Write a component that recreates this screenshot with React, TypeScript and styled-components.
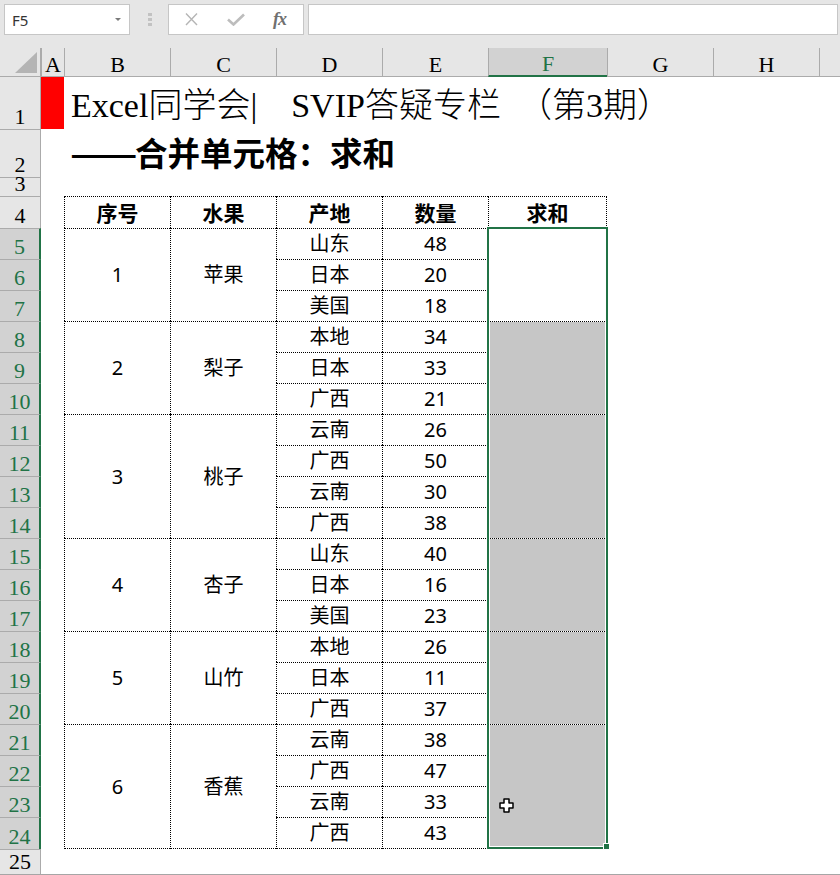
import styled, { createGlobalStyle } from "styled-components"

const GREEN = "#217346"
const HEAD_LINE = "#ababab"

const GlobalStyle = createGlobalStyle`
  html, body {
    margin: 0;
    padding: 0;
  }
  body {
    background: #ffffff;
    font-family: "Noto Sans", "Noto Sans CJK SC", sans-serif;
    overflow: hidden;
  }
`

const Window = styled.div`
  position: relative;
  width: 840px;
  height: 875px;
  display: flex;
  flex-direction: column;
  overflow: hidden;
  background: #ffffff;
`

/* ---------- formula bar ---------- */

const FormulaBar = styled.div`
  flex: none;
  height: 48px;
  box-sizing: border-box;
  display: flex;
  align-items: flex-start;
  padding: 4px 2px 0 4px;
  background: #e6e6e6;
`

const Field = styled.div`
  height: 31px;
  box-sizing: border-box;
  background: #ffffff;
  border: 1px solid #c6c6c6;
`

const NameBox = styled(Field)`
  width: 126px;
  display: flex;
  align-items: center;
  justify-content: space-between;
  padding: 0 8px 0 7px;
  font: 15px "Noto Sans", sans-serif;
  color: #333333;
`

const Caret = styled.span`
  width: 0;
  height: 0;
  border-left: 3px solid transparent;
  border-right: 3px solid transparent;
  border-top: 3px solid #7a7a7a;
`

const Grip = styled.div`
  display: flex;
  flex-direction: column;
  gap: 2px;
  margin: 9px 16px 0 18px;
`

const GripDot = styled.span`
  width: 4px;
  height: 3px;
  background: #c2c2c2;
`

const FxBox = styled(Field)`
  width: 136px;
  display: flex;
  align-items: center;
  gap: 28px;
  padding: 0 15px;
`

const FxLabel = styled.span`
  font: italic bold 18px "Liberation Serif", serif;
  color: #707070;
  letter-spacing: -1px;
`

const FormulaInput = styled(Field)`
  flex: 1;
  margin-left: 4px;
`

/* ---------- sheet ---------- */

const Sheet = styled.div`
  flex: none;
  display: grid;
  grid-template-columns: 41px 23px 106px 106px 106px 106px 119px 106px 106px 1fr;
  grid-template-rows: 29px 52px 48px 19px 32px repeat(19, 31px) 32px 25px;
  border-bottom: 1px solid #a6a6a6;
  background: #ffffff;
`

const Corner = styled.div`
  grid-row: 1;
  grid-column: 1;
  box-sizing: border-box;
  background: #e6e6e6;
  border-right: 1px solid ${HEAD_LINE};
  border-bottom: 1px solid ${HEAD_LINE};
  display: flex;
  align-items: flex-end;
  padding: 0 0 3px 15px;
`

const ColHead = styled.div<{ $col: number; $selected?: boolean }>`
  grid-row: 1;
  grid-column: ${(p) => p.$col + 1};
  box-sizing: border-box;
  display: flex;
  align-items: flex-end;
  justify-content: center;
  background: ${(p) => (p.$selected ? "#d2d2d2" : "#e6e6e6")};
  border-left: 1px solid ${HEAD_LINE};
  border-bottom: ${(p) => (p.$selected ? `2px solid ${GREEN}` : `1px solid ${HEAD_LINE}`)};
  font: 22px/22px "Liberation Serif", serif;
  color: ${(p) => (p.$selected ? GREEN : "#000000")};
`

const RowHead = styled.div<{ $row: number; $selected?: boolean }>`
  grid-row: ${(p) => p.$row + 1};
  grid-column: 1;
  box-sizing: border-box;
  display: flex;
  align-items: flex-end;
  justify-content: center;
  padding-bottom: 4px;
  background: ${(p) => (p.$selected ? "#d2d2d2" : "#e6e6e6")};
  border-top: ${(p) => (p.$row === 1 ? "none" : `1px solid ${HEAD_LINE}`)};
  border-right: ${(p) => (p.$selected ? `2px solid ${GREEN}` : `1px solid ${HEAD_LINE}`)};
  font: 22px/16px "Liberation Serif", serif;
  color: ${(p) => (p.$selected ? GREEN : "#000000")};
`

const RedMark = styled.div`
  grid-row: 2;
  grid-column: 2;
  background: #ff0000;
`

const Title = styled.div`
  grid-row: 2;
  grid-column: 3 / -1;
  display: flex;
  align-items: flex-end;
  padding: 0 0 6px 7px;
  white-space: pre;
  font: 300 34px/34px "Liberation Serif", "Noto Sans CJK SC", serif;
  color: #000000;
`

const Subtitle = styled.div`
  grid-row: 3;
  grid-column: 3 / -1;
  display: flex;
  align-items: flex-end;
  padding: 0 0 9px 6px;
  white-space: nowrap;
  font: bold 32.5px/32.5px "Noto Sans CJK SC", sans-serif;
  color: #000000;
`

const Dashes = styled.span`
  display: inline-block;
  width: 66px;
  transform-origin: left center;
  transform: scaleX(1.22);
  margin-right: -1px;
`

type CellProps = {
  $row: number
  $col: number
  $span?: number
  $head?: boolean
  $shade?: boolean
  $edgeRight?: boolean
  $edgeBottom?: boolean
}

const Cell = styled.div<CellProps>`
  grid-row: ${(p) => p.$row + 1} / span ${(p) => p.$span ?? 1};
  grid-column: ${(p) => p.$col + 1};
  box-sizing: border-box;
  display: flex;
  align-items: center;
  justify-content: center;
  border-left: 1px dotted #000000;
  border-top: 1px dotted #000000;
  border-right: ${(p) => (p.$edgeRight ? "1px dotted #000000" : "none")};
  border-bottom: ${(p) => (p.$edgeBottom ? "1px dotted #000000" : "none")};
  background: ${(p) => (p.$shade ? "#c6c6c6" : "#ffffff")};
  background-clip: padding-box;
  color: #000000;
  font: ${(p) =>
    p.$head
      ? `bold 21px/1 "Noto Sans CJK SC", sans-serif`
      : `20px/1 "Noto Sans", "Noto Sans CJK SC", sans-serif`};
`

const SelectionFrame = styled.div`
  grid-column: 7;
  grid-row: 6 / 26;
  margin: -1px -1px 0 -1px;
  position: relative;
  z-index: 2;
  border: 2px solid ${GREEN};
  box-shadow: inset 0 0 0 1px #ffffff;
  pointer-events: none;
`

const FillHandle = styled.span`
  position: absolute;
  right: -3px;
  bottom: -2px;
  width: 5px;
  height: 5px;
  background: ${GREEN};
  border-left: 1px solid #ffffff;
  border-top: 1px solid #ffffff;
`

const Pointer = styled.svg`
  position: absolute;
  left: 499px;
  top: 798px;
  z-index: 3;
`

const COLUMNS = ["A", "B", "C", "D", "E", "F", "G", "H", ""]
const HEADERS = ["序号", "水果", "产地", "数量", "求和"]

const GROUPS: { no: number; fruit: string; items: [string, number][] }[] = [
  { no: 1, fruit: "苹果", items: [["山东", 48], ["日本", 20], ["美国", 18]] },
  { no: 2, fruit: "梨子", items: [["本地", 34], ["日本", 33], ["广西", 21]] },
  { no: 3, fruit: "桃子", items: [["云南", 26], ["广西", 50], ["云南", 30], ["广西", 38]] },
  { no: 4, fruit: "杏子", items: [["山东", 40], ["日本", 16], ["美国", 23]] },
  { no: 5, fruit: "山竹", items: [["本地", 26], ["日本", 11], ["广西", 37]] },
  { no: 6, fruit: "香蕉", items: [["云南", 38], ["广西", 47], ["云南", 33], ["广西", 43]] },
]

const LAST_ROW = 24

function CloseIcon() {
  return (
    <svg width="15" height="13" viewBox="0 0 15 13">
      <path d="M2 0.5 L13 12 M13 0.5 L2 12" stroke="#b5b5b5" strokeWidth="1.4" fill="none" />
    </svg>
  )
}

function CheckIcon() {
  return (
    <svg width="18" height="13" viewBox="0 0 18 13">
      <path d="M1 6.5 L6.5 11.5 L17 1.5" stroke="#bdbdbd" strokeWidth="2.6" fill="none" />
    </svg>
  )
}

export default function App() {
  let start = 5
  const groups = GROUPS.map((g) => {
    const row = start
    start += g.items.length
    return { ...g, row }
  })

  return (
    <Window>
      <GlobalStyle />
      <FormulaBar>
        <NameBox>
          F5
          <Caret />
        </NameBox>
        <Grip>
          <GripDot />
          <GripDot />
          <GripDot />
        </Grip>
        <FxBox>
          <CloseIcon />
          <CheckIcon />
          <FxLabel>fx</FxLabel>
        </FxBox>
        <FormulaInput />
      </FormulaBar>

      <Sheet>
        <Corner>
          <svg width="22" height="21" viewBox="0 0 22 21">
            <path d="M22 0 L22 21 L0 21 Z" fill="#b4b4b4" />
          </svg>
        </Corner>
        {COLUMNS.map((c, i) => (
          <ColHead key={i} $col={i + 1} $selected={c === "F"}>
            {c}
          </ColHead>
        ))}
        {Array.from({ length: 25 }, (_, i) => i + 1).map((r) => (
          <RowHead key={r} $row={r} $selected={r >= 5 && r <= LAST_ROW}>
            {r}
          </RowHead>
        ))}

        <RedMark />
        <Title>Excel同学会|　SVIP答疑专栏　（第3期）</Title>
        <Subtitle>
          <Dashes>——</Dashes>合并单元格：求和
        </Subtitle>

        {HEADERS.map((h, i) => (
          <Cell key={h} $row={4} $col={i + 2} $head $edgeRight={i === 4}>
            {h}
          </Cell>
        ))}

        {groups.map((g) => {
          const span = g.items.length
          const ends = g.row + span - 1 === LAST_ROW
          return [
            <Cell key={`b${g.no}`} $row={g.row} $col={2} $span={span} $edgeBottom={ends}>
              {g.no}
            </Cell>,
            <Cell key={`c${g.no}`} $row={g.row} $col={3} $span={span} $edgeBottom={ends}>
              {g.fruit}
            </Cell>,
            ...g.items.flatMap(([place, qty], j) => {
              const bottom = g.row + j === LAST_ROW
              return [
                <Cell key={`d${g.no}-${j}`} $row={g.row + j} $col={4} $edgeBottom={bottom}>
                  {place}
                </Cell>,
                <Cell key={`e${g.no}-${j}`} $row={g.row + j} $col={5} $edgeBottom={bottom}>
                  {qty}
                </Cell>,
              ]
            }),
            <Cell
              key={`f${g.no}`}
              $row={g.row}
              $col={6}
              $span={span}
              $shade={g.no !== 1}
              $edgeRight
              $edgeBottom={ends}
            />,
          ]
        })}

        <SelectionFrame>
          <FillHandle />
        </SelectionFrame>
      </Sheet>

      <Pointer width="16" height="16" viewBox="0 0 16 16">
        <path
          d="M5 1 H10 V5 H14 V10 H10 V14 H5 V10 H1 V5 H5 Z"
          fill="#ffffff"
          stroke="#000000"
          strokeWidth="1.5"
          strokeLinejoin="round"
        />
      </Pointer>
    </Window>
  )
}
